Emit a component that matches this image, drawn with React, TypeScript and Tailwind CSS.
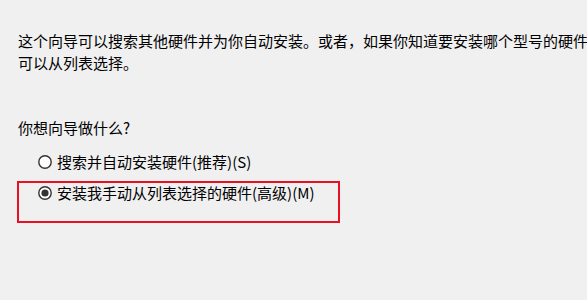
import React from 'react';

function Radio({ checked }: { checked?: boolean }) {
  return (
    <svg width="14" height="14" viewBox="0 0 14 14" className="shrink-0">
      <circle cx="7" cy="7" r="6.2" fill="#ffffff" stroke="#333333" strokeWidth="1.4" />
      {checked && <circle cx="7" cy="7" r="3.6" fill="#333333" />}
    </svg>
  );
}

export default function App() {
  return (
    <div
      className="w-[587px] h-[300px] overflow-hidden bg-[#f0f0f0] pl-[18px] pt-[30px] text-[15px] text-black"
      style={{ fontFamily: '"Noto Sans CJK SC", "Noto Sans", sans-serif' }}
    >
      <p className="leading-[22px] whitespace-nowrap">
        这个向导可以搜索其他硬件并为你自动安装。或者，如果你知道要安装哪个型号的硬件
        <br />
        可以从列表选择。
      </p>

      <p className="mt-[43px] leading-[22px]">你想向导做什么?</p>

      <div className="mt-[15px] ml-[20px] flex items-center gap-[5px] leading-[16px] h-[16px]">
        <Radio />
        <span>搜索并自动安装硬件(推荐)(S)</span>
      </div>

      <div className="mt-[11px] ml-[-1px] w-[323px] h-[42px] border-2 border-[#e81123] pl-[19px] pt-[2px]">
        <div className="flex items-center gap-[5px] leading-[16px] h-[16px]">
          <Radio checked />
          <span>安装我手动从列表选择的硬件(高级)(M)</span>
        </div>
      </div>
    </div>
  );
}
